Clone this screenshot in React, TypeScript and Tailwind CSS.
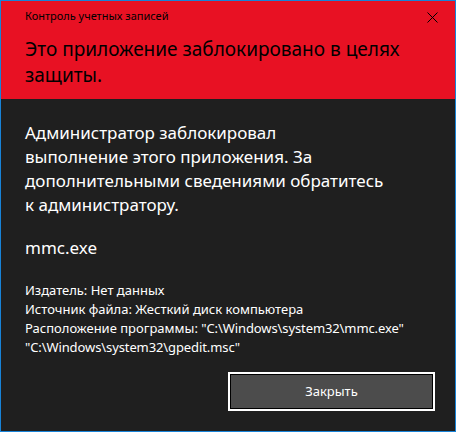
export default function App() {
  return (
    <div
      className="flex h-[432px] w-[456px] flex-col border border-[#1883d7] bg-[#1f1f1f]"
      style={{ fontFamily: '"Noto Sans", "Open Sans", sans-serif' }}
    >
      {/* red banner */}
      <div className="h-[98px] shrink-0 bg-[#e81123] text-black">
        <div className="flex items-start justify-between pl-6 pr-[17px] pt-[7px]">
          <span className="text-[11px] leading-4">Контроль учетных записей</span>
          <svg width="11" height="11" viewBox="0 0 11 11" className="mt-[4px]">
            <path d="M0.5 0.5 L10.5 10.5 M10.5 0.5 L0.5 10.5" stroke="#000" strokeWidth="1" fill="none" />
          </svg>
        </div>
        <h1 className="mt-[12px] pl-6 text-[19px] leading-[26px] font-normal">
          Это приложение заблокировано в целях
          <br />
          защиты.
        </h1>
      </div>

      {/* body */}
      <div className="flex flex-1 flex-col px-6 text-white">
        <p className="mt-[22px] whitespace-nowrap text-[17px] leading-6">
          Администратор заблокировал
          <br />
          выполнение этого приложения. За
          <br />
          дополнительными сведениями обратитесь
          <br />к администратору.
        </p>
        <p className="mt-[19px] text-[17px] leading-6">mmc.exe</p>
        <div className="mt-[21px] whitespace-nowrap text-[13px] leading-[19px]">
          <p>Издатель: Нет данных</p>
          <p>Источник файла: Жесткий диск компьютера</p>
          <p>
            Расположение программы:{' '}
            <span className="tracking-[-0.1px]">"C:\Windows\system32\mmc.exe"</span>
          </p>
          <p className="tracking-[-0.1px]">"C:\Windows\system32\gpedit.msc"</p>
        </div>
        <div className="mt-auto flex justify-end pb-5">
          <button className="-mr-1 h-[39px] w-[207px] border-2 border-white bg-[#4c4c4c] text-[13px] text-white shadow-[inset_0_0_0_1px_#000]">
            Закрыть
          </button>
        </div>
      </div>
    </div>
  )
}
